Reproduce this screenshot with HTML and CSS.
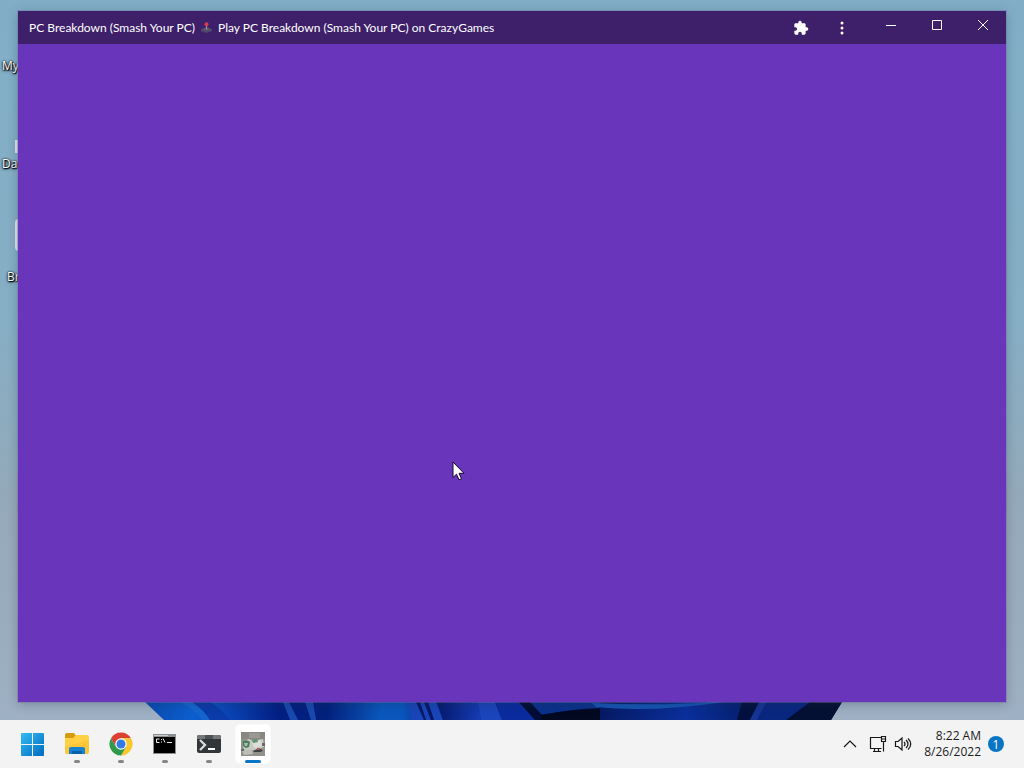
FILE: index.html
```html
<!DOCTYPE html>
<html lang="en">
<head>
<meta charset="utf-8">
<title>Desktop</title>
<link rel="stylesheet" href="styles.css">
</head>
<body>
<div class="screen">
  <main class="desktop">
    <svg class="bloom" viewBox="0 0 1024 18" preserveAspectRatio="none" aria-hidden="true">
      <defs>
        <linearGradient id="petals" gradientUnits="userSpaceOnUse" x1="145" y1="0" x2="842" y2="0">
          <stop offset="0" stop-color="#0a49ad"/><stop offset=".07" stop-color="#0c5fd0"/>
          <stop offset=".13" stop-color="#0a3fae"/><stop offset=".19" stop-color="#031f83"/>
          <stop offset=".26" stop-color="#03207c"/><stop offset=".34" stop-color="#0a58bc"/>
          <stop offset=".37" stop-color="#0a55bc"/><stop offset=".41" stop-color="#0b2a8e"/>
          <stop offset="1" stop-color="#051a50"/>
        </linearGradient>
        <linearGradient id="fold"><stop offset="0" stop-color="#061a6c"/><stop offset="1" stop-color="#163bb4"/></linearGradient>
        <linearGradient id="sweep"><stop offset="0" stop-color="#061a63"/><stop offset=".6" stop-color="#0a2f9c"/><stop offset="1" stop-color="#06206f"/></linearGradient>
      </defs>
      <path fill="url(#petals)" d="M145 0H842L831 18H164Z"/>
      <path fill="#1565cf" d="M180 0h12q12 8 18 18h-8Q194 7 180 0Z"/>
      <path fill="#0a3ba8" d="M192 0h18q12 7 20 18h-20Q204 8 192 0Z"/>
      <path fill="#1849ae" d="M283 0h6l9 18h-8ZM305 0h8l3 18h-5Z"/>
      <path fill="#1a45b8" d="M407 0h9l8 18h-12ZM420 0h4l7 18h-5ZM428 0h8l7 18h-9Z"/>
      <path fill="#071968" d="M416 0h4l6 18h-2ZM424 0h4l6 18h-3Z"/>
      <path fill="url(#fold)" d="M437 0h41l3 18h-38Z"/>
      <path fill="#1b45ba" d="M478 0h17l7 18h-21Z"/>
      <path fill="#0a2b9d" d="M495 0h24l16 18h-33Z"/>
      <path fill="#020c34" d="M519 0H601V18H535Z"/>
      <path fill="#0b318c" d="M530 0h71v6q-32 1-59 7Z"/>
      <path fill="#02081f" d="M540 13q30-5 61-6V18h-59Z"/>
      <path fill="url(#sweep)" d="M600 0H745L737 18H600Z"/>
      <path fill="#1554b4" d="M592 1Q660 4 714 0h10Q650 11 596 5Z"/>
      <path fill="#03103f" d="M742 0h20l-10 18h-15Z"/>
      <path fill="#173494" d="M759 0h8l-10 18h-7Z"/>
      <path fill="#0a2780" d="M767 0h48l-23 18h-35Z"/>
      <path fill="#041033" d="M810 0h32l-11 18h-45Z"/>
    </svg>

    <ul class="shortcuts">
      <li class="shortcut first">My</li>
      <li class="shortcut second">Da</li>
      <li class="shortcut third">Br</li>
    </ul>

    <section class="window">
      <header class="titlebar">
        <h1 class="title">
          <span>PC Breakdown (Smash Your PC)</span>
          <svg class="joystick" viewBox="0 0 12 12" aria-hidden="true">
            <path fill="#4d4768" d="M0 8 5 6h3l4 2v2l-6 2-6-2Z"/>
            <path fill="#5d5474" d="M1 8 6 6l5 2-5 2Z"/>
            <path stroke="#9792a6" stroke-width="1.3" d="M6 3v5"/>
            <circle cx="6" cy="2.4" r="2.2" fill="#d73a55"/>
          </svg>
          <span>Play PC Breakdown (Smash Your PC) on CrazyGames</span>
        </h1>
        <div class="tools">
          <button class="tool" aria-label="Extensions">
            <svg width="16" height="16" viewBox="0 0 24 24"><path fill="#fff" d="M20.500 11H19V7c0-1.100-.9-2-2-2h-4V3.500a2.500 2.500 0 0 0-5 0V5H4c-1.100 0-2 .9-2 2v3.800h1.500a2.700 2.700 0 0 1 0 5.400H2V20c0 1.100.9 2 2 2h3.800v-1.500a2.700 2.700 0 0 1 5.400 0V22H17c1.100 0 2-.9 2-2v-4h1.500a2.500 2.500 0 0 0 0-5Z"/></svg>
          </button>
          <button class="tool" aria-label="Menu">
            <svg width="16" height="16" viewBox="0 0 16 16" fill="#fff"><circle cx="8" cy="3" r="1.500"/><circle cx="8" cy="8" r="1.500"/><circle cx="8" cy="13" r="1.500"/></svg>
          </button>
        </div>
        <div class="controls">
          <button class="control" aria-label="Minimize"><svg width="12" height="12" viewBox="0 0 12 12"><path d="M1 6.500h10"/></svg></button>
          <button class="control" aria-label="Maximize"><svg width="12" height="12" viewBox="0 0 12 12"><path d="M1.500 1.500h9v9h-9Z"/></svg></button>
          <button class="control" aria-label="Close"><svg width="12" height="12" viewBox="0 0 12 12"><path d="m1 1 10 10M11 1 1 11"/></svg></button>
        </div>
      </header>
      <div class="page"></div>
    </section>
  </main>

  <footer class="taskbar">
    <nav class="apps" aria-label="Apps">
      <button class="app" aria-label="Start">
        <svg width="24" height="24" viewBox="0 0 24 24">
          <defs><linearGradient id="win" x1="0" y1="0" x2="24" y2="24" gradientUnits="userSpaceOnUse"><stop offset="0" stop-color="#35bdf3"/><stop offset="1" stop-color="#0069bf"/></linearGradient></defs>
          <path fill="url(#win)" d="M0 2q0-1 1-1h10v11H0ZM12 1h10q1 0 1 1v10H12ZM0 13h11v11H1q-1 0-1-1ZM12 13h11v10q0 1-1 1H12Z"/>
        </svg>
      </button>
      <button class="app running" aria-label="File Explorer">
        <svg width="26" height="24" viewBox="0 0 26 24">
          <path fill="#d69b0c" d="M1 3q0-2 2-2h7l3 4v5H1Z"/>
          <path fill="#ffd044" d="M1 6h8l3-3h11q2 0 2 2v15q0 2-2 2H3q-2 0-2-2Z"/>
          <path fill="#fbbf2d" d="M1 15 25 8v12q0 2-2 2H3q-2 0-2-2Z" opacity=".6"/>
          <path fill="#1583cf" d="M5 22v-5q0-2 2-2h12q2 0 2 2v5Z"/>
          <path fill="#0861ad" d="M8 19h10v3H8Z"/>
        </svg>
      </button>
      <button class="app running" aria-label="Google Chrome">
        <svg width="24" height="24" viewBox="0 0 24 24">
          <path fill="#dc4033" d="M2.040 6.250A11.500 11.500 0 0 1 21.960 6.250H12L7 14.900Z"/>
          <path fill="#fac72c" d="M21.960 6.250A11.500 11.500 0 0 1 12 23.500L17 14.900 12 6.250Z"/>
          <path fill="#2d9a4b" d="M12 23.500A11.500 11.500 0 0 1 2.040 6.250L7 14.900H17Z"/>
          <circle cx="12" cy="12" r="5.750" fill="#fff"/><circle cx="12" cy="12" r="4.500" fill="#327be5"/>
        </svg>
      </button>
      <button class="app running" aria-label="Command Prompt">
        <svg width="24" height="22" viewBox="0 0 24 22">
          <path fill="#8b8f91" d="M0 1h23v20H0Z"/><path fill="#c7cbcc" d="M1 2h14v1H1Z"/><path fill="#000" d="M1 4h21v16H1Z"/>
          <path fill="none" stroke="#eee" d="M6.500 6H3.500v3.500h3M8.500 6v1M8.500 8.500v1M10 5.500l2 4M14 9.500h5"/>
        </svg>
      </button>
      <button class="app running" aria-label="Terminal">
        <svg width="26" height="22" viewBox="0 0 26 22">
          <path fill="#333638" d="M1 4q0-2 2-2h20q2 0 2 2v14q0 2-2 2H3q-2 0-2-2Z"/>
          <path fill="#74787b" d="M1 6V4q0-2 2-2h20q2 0 2 2v2Z"/><path fill="#4d5154" d="M9 2h8v4H9Z"/>
          <path fill="none" stroke="#d9dddd" stroke-width="2.300" d="m4 7 5 5-5 5"/><path stroke="#fff" stroke-width="2" d="M12 16h7"/>
        </svg>
      </button>
      <button class="app running active" aria-label="PC Breakdown">
        <svg width="24" height="24" viewBox="0 0 24 24">
          <path fill="#8f938b" d="M0 0h24v24H0Z"/><path fill="#898781" d="M0 0h24v7H0Z"/><path fill="#9a9993" d="M8 1h11v5H8Z"/>
          <path fill="#c6cac2" d="M2 9 8 7l4 2 10-2 1 8-7 3-12 1-2-4Z"/>
          <path fill="#4f7a5c" d="M2 9q4-2 7 1l-1 5-3 1-3-2Z"/><path fill="#a9c5b0" d="M3 11h4l-1 3H4Z"/>
          <path fill="#dcdfd8" d="m11 10 9-2 1 6-8 2Z"/><path fill="#5f9273" d="m11 8 5-1 1 3-5 1Z"/>
          <path fill="#3d4144" d="m12 19 4-2h4l2 2-3 1h-6Z"/><path fill="#ad5955" d="M16 16h3v2h-3Z"/>
          <path fill="#bdbdb6" d="m1 19 10-1 1 4-9 1Z"/><path fill="#6d6962" d="M0 17h3v2H0ZM21 11h3v3h-3Z"/>
        </svg>
      </button>
    </nav>
    <div class="tray">
      <button class="tray-button" aria-label="Show hidden icons"><svg width="14" height="10" viewBox="0 0 14 10"><path d="m1 8 6-6 6 6"/></svg></button>
      <button class="tray-button status" aria-label="Network and volume">
        <svg width="18" height="18" viewBox="0 0 18 18"><path d="M12 2.500H1.500v11h11M5.500 14v2M9.500 14v2M4 16.500h8M12.500 1.500h4v5h-4ZM14.500 7v9.500M12.500 4h4"/></svg>
        <svg width="18" height="18" viewBox="0 0 18 18"><path d="M1.500 6.500v5H4l4 3.500V3L4 6.500ZM10 7q2 2 0 4M12 5q4 4 0 8M14 3.500q5.500 5.500 0 11"/></svg>
      </button>
      <button class="clock"><time datetime="2022-08-26T08:22">8:22 AM<br>8/26/2022</time></button>
      <button class="badge" aria-label="1 notification">1</button>
    </div>
  </footer>

  <svg class="cursor" width="13" height="20" viewBox="0 0 13 20" aria-hidden="true"><path fill="#fff" stroke="#16082d" d="M1 1v15.500l3.500-3.300 2.500 5.600 2.500-1.100L7 12.300h5Z"/></svg>
</div>
</body>
</html>
```
FILE: styles.css
```css
* { box-sizing: border-box; }

body {
  margin: 0;
  font-family: "Open Sans", "Noto Sans", sans-serif;
  color: #1b1b1b;
}

button {
  display: flex;
  align-items: center;
  justify-content: center;
  margin: 0;
  padding: 0;
  border: 0;
  background: none;
  color: inherit;
  font: inherit;
}

.screen {
  position: relative;
  display: flex;
  flex-direction: column;
  height: 100vh;
  overflow: hidden;
}

.desktop {
  position: relative;
  display: flex;
  flex: 1;
  min-height: 0;
  padding: 11px 18px 18px;
  background: linear-gradient(180deg, #81aec7 0%, #86aec4 45%, #94a9b9 70%, #9eb0c3 100%);
}

.bloom {
  position: absolute;
  left: 0;
  bottom: 0;
  width: 100%;
  height: 18px;
}

.shortcuts {
  position: absolute;
  inset: 0;
  margin: 0;
  padding: 0;
  list-style: none;
}

.shortcut {
  position: absolute;
  left: 2px;
  color: #fff;
  font-size: 12px;
  line-height: 16px;
  text-shadow: 1px 1px 1px #000, 0 0 2px #000, 0 1px 3px #000;
}

.first { top: 58px; }
.second { top: 156px; }
.third { top: 269px; left: 7px; }

.second::before,
.third::before {
  content: "";
  position: absolute;
  left: 13px;
  bottom: 19px;
  width: 8px;
  height: 13px;
  background: #dce7ee;
}

.third::before {
  left: 8px;
  bottom: 34px;
  height: 32px;
  border-radius: 8px;
}

.window {
  position: relative;
  display: flex;
  flex: 1;
  flex-direction: column;
  background: #6935bb;
  box-shadow: 0 0 0 1px rgba(120, 110, 165, .4), 0 2px 10px rgba(30, 50, 70, .3);
}

.titlebar {
  display: flex;
  height: 33px;
  background: #3e1f69;
  color: #fff;
}

.title {
  display: flex;
  flex: 1;
  align-items: center;
  gap: 6px;
  min-width: 0;
  margin: 0;
  padding-left: 11px;
  font-family: Lato, "Open Sans", sans-serif;
  font-size: 12px;
  font-weight: 400;
  white-space: nowrap;
}

.joystick {
  width: 11px;
  height: 11px;
}

.tools {
  display: flex;
  gap: 8px;
  padding-right: 10px;
}

.tool { width: 33px; }

.controls { display: flex; }

.control {
  width: 46px;
  height: 28px;
}

.control path {
  fill: none;
  stroke: #fff;
}

.page { flex: 1; }

.taskbar {
  display: flex;
  justify-content: space-between;
  height: 48px;
  padding: 0 20px 0 11px;
  background: #f3f3f4;
}

.apps {
  display: flex;
  align-items: center;
}

.app {
  position: relative;
  width: 44px;
  height: 48px;
}

.running::after {
  content: "";
  position: absolute;
  bottom: 5px;
  left: 19px;
  width: 6px;
  height: 3px;
  border-radius: 2px;
  background: #868686;
}

.active::before {
  content: "";
  position: absolute;
  inset: 5px;
  border-radius: 4px;
  background: #fff;
  box-shadow: 0 0 0 1px #fafafa;
}

.active svg { position: relative; }

.active::after {
  left: 14px;
  width: 16px;
  background: #0875c5;
}

.tray {
  display: flex;
  align-items: center;
}

.tray-button svg {
  fill: none;
  stroke: #171717;
  stroke-width: 1.2;
}

.status {
  gap: 7px;
  margin-left: 12px;
}

.clock {
  margin-left: 12px;
  font-size: 12px;
  line-height: 16px;
  text-align: right;
}

.badge {
  width: 16px;
  height: 16px;
  margin-left: 7px;
  border-radius: 50%;
  background: #0875c5;
  color: #fff;
  font-size: 12px;
}

.cursor {
  position: absolute;
  left: 452px;
  top: 461px;
}
```
